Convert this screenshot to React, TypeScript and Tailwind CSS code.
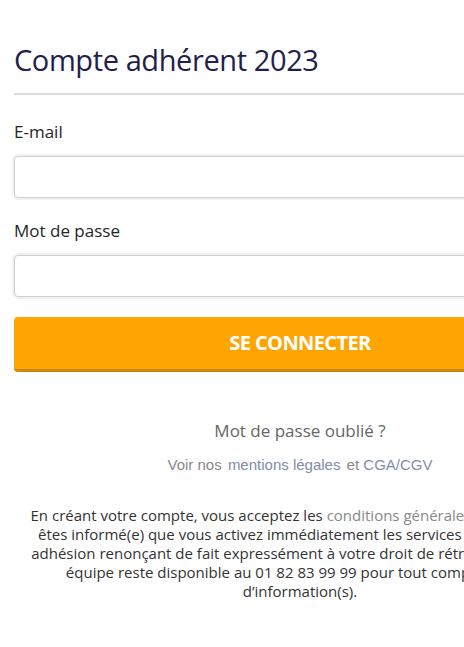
export default function App() {
  return (
    <div className="w-full min-h-screen overflow-hidden bg-white">
      <div className="ml-[14px] w-[572px] pt-[40px]" style={{ fontFamily: '"Open Sans", sans-serif' }}>
        <h1 className="text-[29px] leading-[40px] font-medium text-[#221e4f] tracking-[-0.4px]">Compte adhérent 2023</h1>
        <div className="mt-[13px] h-[2px] bg-[#dcdcdc]" />

        <label className="block mt-[25px] text-[17px] leading-[24px] font-medium text-[#262626]">E-mail</label>
        <div className="mt-[10px] rounded-[6px] bg-[#f1f1f1] p-[2px] -mx-[2px]">
          <input type="email" className="block w-full h-[42px] rounded-[4px] border border-[#cfcfcf] bg-white px-3 outline-none" />
        </div>

        <label className="block mt-[19px] text-[17px] leading-[24px] font-medium text-[#262626]">Mot de passe</label>
        <div className="mt-[10px] rounded-[6px] bg-[#f1f1f1] p-[2px] -mx-[2px]">
          <input type="password" className="block w-full h-[42px] rounded-[4px] border border-[#cfcfcf] bg-white px-3 outline-none" />
        </div>

        <button className="mt-[18px] w-full h-[55px] rounded-[4px] bg-[#ffa503] border-b-[3px] border-[#c98a14] text-white font-bold text-[20px] tracking-[-0.6px]">
          SE CONNECTER
        </button>

        <p className="mt-[47px] text-center text-[17px] leading-[24px] text-[#666]">Mot de passe oublié ?</p>
        <p className="mt-[12px] text-center text-[15px] leading-[20px] text-[#888]" style={{ fontFamily: '"Liberation Sans", Arial, sans-serif' }}>
          Voir nos <a className="text-[#7f8cae] mx-[2px]">mentions légales</a> et <a className="text-[#7f8cae]">CGA/CGV</a>
        </p>

        {/* lignes coupées comme sur la maquette */}
        <p className="mt-[31px] text-center text-[15px] leading-[19px] text-[#333]">
          En créant votre compte, vous acceptez les <a className="text-[#888]">conditions générales <span className="tracking-[-1.5px]">d’adhésion</span></a><span className="tracking-[-1.5px]">. Vous</span>
          <br />
          êtes informé(e) que vous activez immédiatement les services <span className="tracking-[-0.9px]">associés à votre</span>
          <br />
          adhésion renonçant de fait expressément à votre droit de rétractation. Notre
          <br />
          équipe reste disponible au 01 82 83 99 99 pour tout comp<span className="tracking-[2.5px]">lément</span>
          <br />
          d’information(s).
        </p>
      </div>
    </div>
  );
}
